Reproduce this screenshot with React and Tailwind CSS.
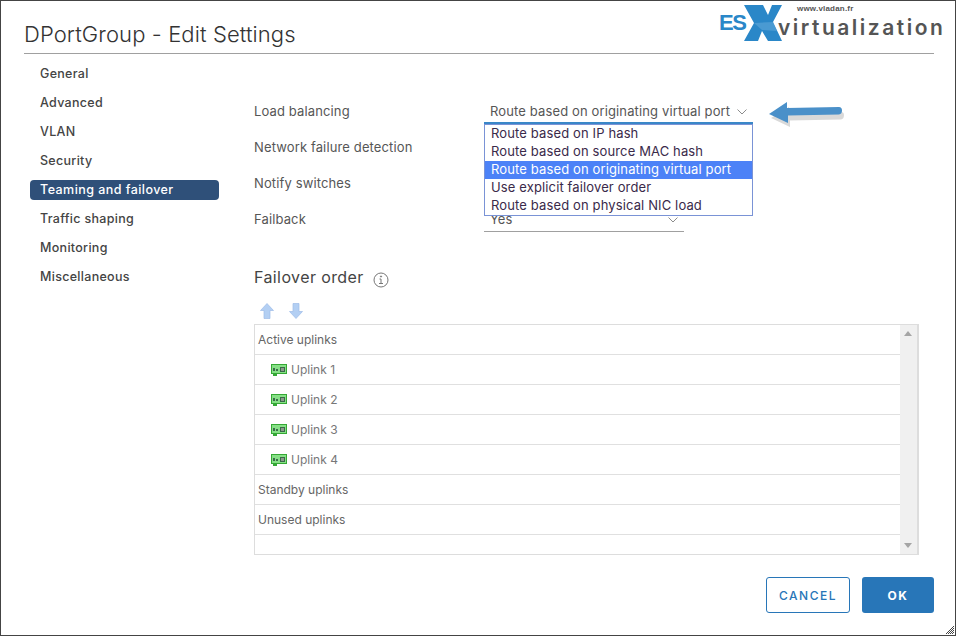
import React from 'react';

const sections = ['General', 'Advanced', 'VLAN', 'Security', 'Teaming and failover', 'Traffic shaping', 'Monitoring', 'Miscellaneous'];
const policies = [
  'Route based on IP hash',
  'Route based on source MAC hash',
  'Route based on originating virtual port',
  'Use explicit failover order',
  'Route based on physical NIC load',
];
const uplinks = ['Uplink 1', 'Uplink 2', 'Uplink 3', 'Uplink 4'];

const Chevron = () => (
  <svg width="10" height="6" viewBox="0 0 10 6" fill="none" stroke="#8c8c8c" strokeWidth="1">
    <path d="M0.5 0.5 L5 5 L9.5 0.5" />
  </svg>
);

const NicIcon = () => (
  <svg width="16" height="12" viewBox="0 0 16 12">
    <path d="M0 0 H16 V10 H6 V12 H2 V10 H0 Z" fill="#35a835" />
    <rect x="1" y="1" width="14" height="8" fill="#86e086" />
    <rect x="2" y="4" width="2" height="3" fill="#3a6a4a" />
    <rect x="5" y="5" width="2" height="2" fill="#3a6a4a" />
    <rect x="9" y="3" width="5" height="5" fill="#3a6a4a" />
    <rect x="10" y="4" width="3" height="3" fill="#8d9a8d" />
  </svg>
);

const MoveArrow = ({ down }) => (
  <svg width="14" height="16" viewBox="0 0 14 16" className={down ? 'rotate-180' : ''}>
    <path d="M7 0.5 L13.5 7.5 H10 V15.5 H4 V7.5 H0.5 Z" fill="#b3cff3" stroke="#9dbce8" strokeWidth="0.7" />
  </svg>
);

const Field = ({ label, children }) => (
  <div className="flex h-[36px] items-center">
    <div className="w-[230px] text-[13px] tracking-[0.13px] text-[#565656]">{label}</div>
    {children}
  </div>
);

const Row = ({ children, indent }) => (
  <div className={`flex h-[30px] items-center gap-[4px] border-b border-[#e0e0e0] text-[12px] text-[#666] ${indent ? 'pl-[16px]' : 'pl-[3px]'}`}>
    {children}
  </div>
);

const App = () => {
  return (
    <div className="relative flex h-[636px] w-[956px] flex-col overflow-hidden border border-[#444] bg-white font-['Inter',sans-serif]">
      <div className="ml-[23px] mr-[21px] mt-[18px] h-[35px] border-b border-[#a0a0a0]">
        <h1 className="text-[22px] font-light leading-[30px] tracking-[0.1px] text-[#333]">DPortGroup - Edit Settings</h1>
      </div>

      <div className="flex">
        <nav className="ml-[29px] mt-[10px] w-[189px]">
          {sections.map((s) => (
            <div
              key={s}
              className={`mb-[9px] h-[20px] rounded-[4px] pl-[10px] text-[12.5px] font-medium leading-[20px] ${
                s === 'Teaming and failover' ? 'bg-[#2f5079] font-bold tracking-[0.45px] text-white' : 'tracking-[0.3px] text-[#444]'
              }`}
            >
              {s}
            </div>
          ))}
        </nav>

        <main className="ml-[35px] w-[665px] pt-[40px]">
          <Field label="Load balancing">
            <div className="flex h-[36px] w-[268px] items-center gap-[7px] pl-[6px] text-[13px] tracking-[0.13px] text-[#565656]">
              Route based on originating virtual port
              <Chevron />
            </div>
          </Field>
          <Field label="Network failure detection" />
          <Field label="Notify switches" />
          <Field label="Failback">
            <div className="flex h-[24px] w-[200px] items-center justify-between border-b border-[#a0a0a0] px-[6px] text-[13px] text-[#565656]">
              Yes
              <Chevron />
            </div>
          </Field>

          <div className="mt-[27px] flex h-[24px] items-center gap-[9px]">
            <h2 className="text-[16px] font-normal tracking-[0.4px] text-[#444]">Failover order</h2>
            <svg width="16" height="16" viewBox="0 0 16 16" fill="none" stroke="#777" className="mt-[5px]">
              <circle cx="8" cy="8" r="7" />
              <path d="M6.5 7 H8 V11.5 M6 11.5 H10" />
              <circle cx="8" cy="4.5" r="0.6" fill="#777" />
            </svg>
          </div>

          <div className="mt-[14px] flex h-[21px] items-start gap-[15px] pl-[6px]">
            <MoveArrow />
            <MoveArrow down />
          </div>

          <div className="flex h-[231px] border border-[#ddd]">
            <div className="flex-1">
              <Row>Active uplinks</Row>
              {uplinks.map((u) => (
                <Row key={u} indent>
                  <NicIcon />
                  <span className="text-[#777]">{u}</span>
                </Row>
              ))}
              <Row>Standby uplinks</Row>
              <Row>Unused uplinks</Row>
            </div>
            <div className="flex w-[18px] flex-col items-center justify-between border-r border-[#ddd] bg-[#f0f0f0] py-[6px] pr-px">
              <div className="h-0 w-0 border-x-[4px] border-b-[5px] border-x-transparent border-b-[#a5a5a5]" />
              <div className="h-0 w-0 border-x-[4px] border-t-[5px] border-x-transparent border-t-[#a5a5a5]" />
            </div>
          </div>
        </main>
      </div>

      <footer className="absolute bottom-[22px] right-[21px] flex gap-[12px]">
        <button className="h-[36px] w-[84px] rounded-[3px] border border-[#2876b8] bg-white pt-px text-[12px] font-medium tracking-[1.5px] text-[#2876b8]">
          CANCEL
        </button>
        <button className="h-[36px] w-[72px] rounded-[3px] bg-[#2876b8] pt-px text-[12px] font-bold tracking-[1.5px] text-white">
          OK
        </button>
      </footer>

      {/* resize grip */}
      <svg width="8" height="8" viewBox="0 0 8 8" stroke="#444" className="absolute bottom-px right-px">
        <path d="M0 8 L8 0 M2 8 L8 2 M4 8 L8 4 M6 8 L8 6" />
      </svg>

      {/* open select list */}
      <div className="absolute left-[483px] top-[121px] w-[269px] border-t-2 border-t-[#3a87c8]">
        <div className="border border-[#7a93d6] bg-white">
          {policies.map((p, i) => (
            <div
              key={p}
              className={`h-[18px] pl-[6px] text-[13px] leading-[16px] tracking-[0.13px] ${i === 2 ? 'bg-[#4c82f7] text-white' : 'text-[#3a2a4a]'}`}
            >
              {p}
            </div>
          ))}
        </div>
      </div>

      {/* annotation arrow */}
      <svg width="90" height="36" viewBox="0 0 90 36" className="absolute left-[763px] top-[96px]">
        <path d="M6 18 L24 7 L24 13 L76 12 Q79 12 79 15 Q79 19 76 19.500 L25 20.500 L25 27 Z" fill="#000" opacity="0.15" transform="translate(1 3)" />
        <path d="M5 17 L23 5 L23 11 L75 10 Q78 10 78 13.500 Q78 17 75 17.500 L24 18.500 L24 26 Z" fill="#4a90c9" />
      </svg>

      {/* logo */}
      <div className="absolute left-[717px] top-[3px] h-[40px] w-[230px] bg-white font-['Liberation_Sans',sans-serif]">
        <span className="absolute left-[1px] top-[9px] text-[22px] font-bold leading-[20px] tracking-[-1.5px] text-[#2a87c8]">ES</span>
        <svg width="42" height="38" viewBox="0 0 42 38" className="absolute left-[26px] top-[1px]">
          <path d="M0 0 H19 L24 10 L28 0 H38 L29 17 L38 36 H24 L18 26 L14 36 H0 L10 18 Z" fill="#2a87c8" />
          <path d="M10 18 L29 17 L33 26 L18 25 Z" fill="#6aaedc" opacity="0.5" />
        </svg>
        <span className="absolute left-[60px] top-[14px] font-['Inter',sans-serif] text-[21px] font-semibold leading-[20px] tracking-[2.5px] text-[#555]">virtualization</span>
        <span className="absolute left-[79px] top-[1px] text-[8px] font-bold leading-[8px] tracking-[0.2px] text-[#555]">www.vladan.fr</span>
      </div>
    </div>
  );
};

export default App;
